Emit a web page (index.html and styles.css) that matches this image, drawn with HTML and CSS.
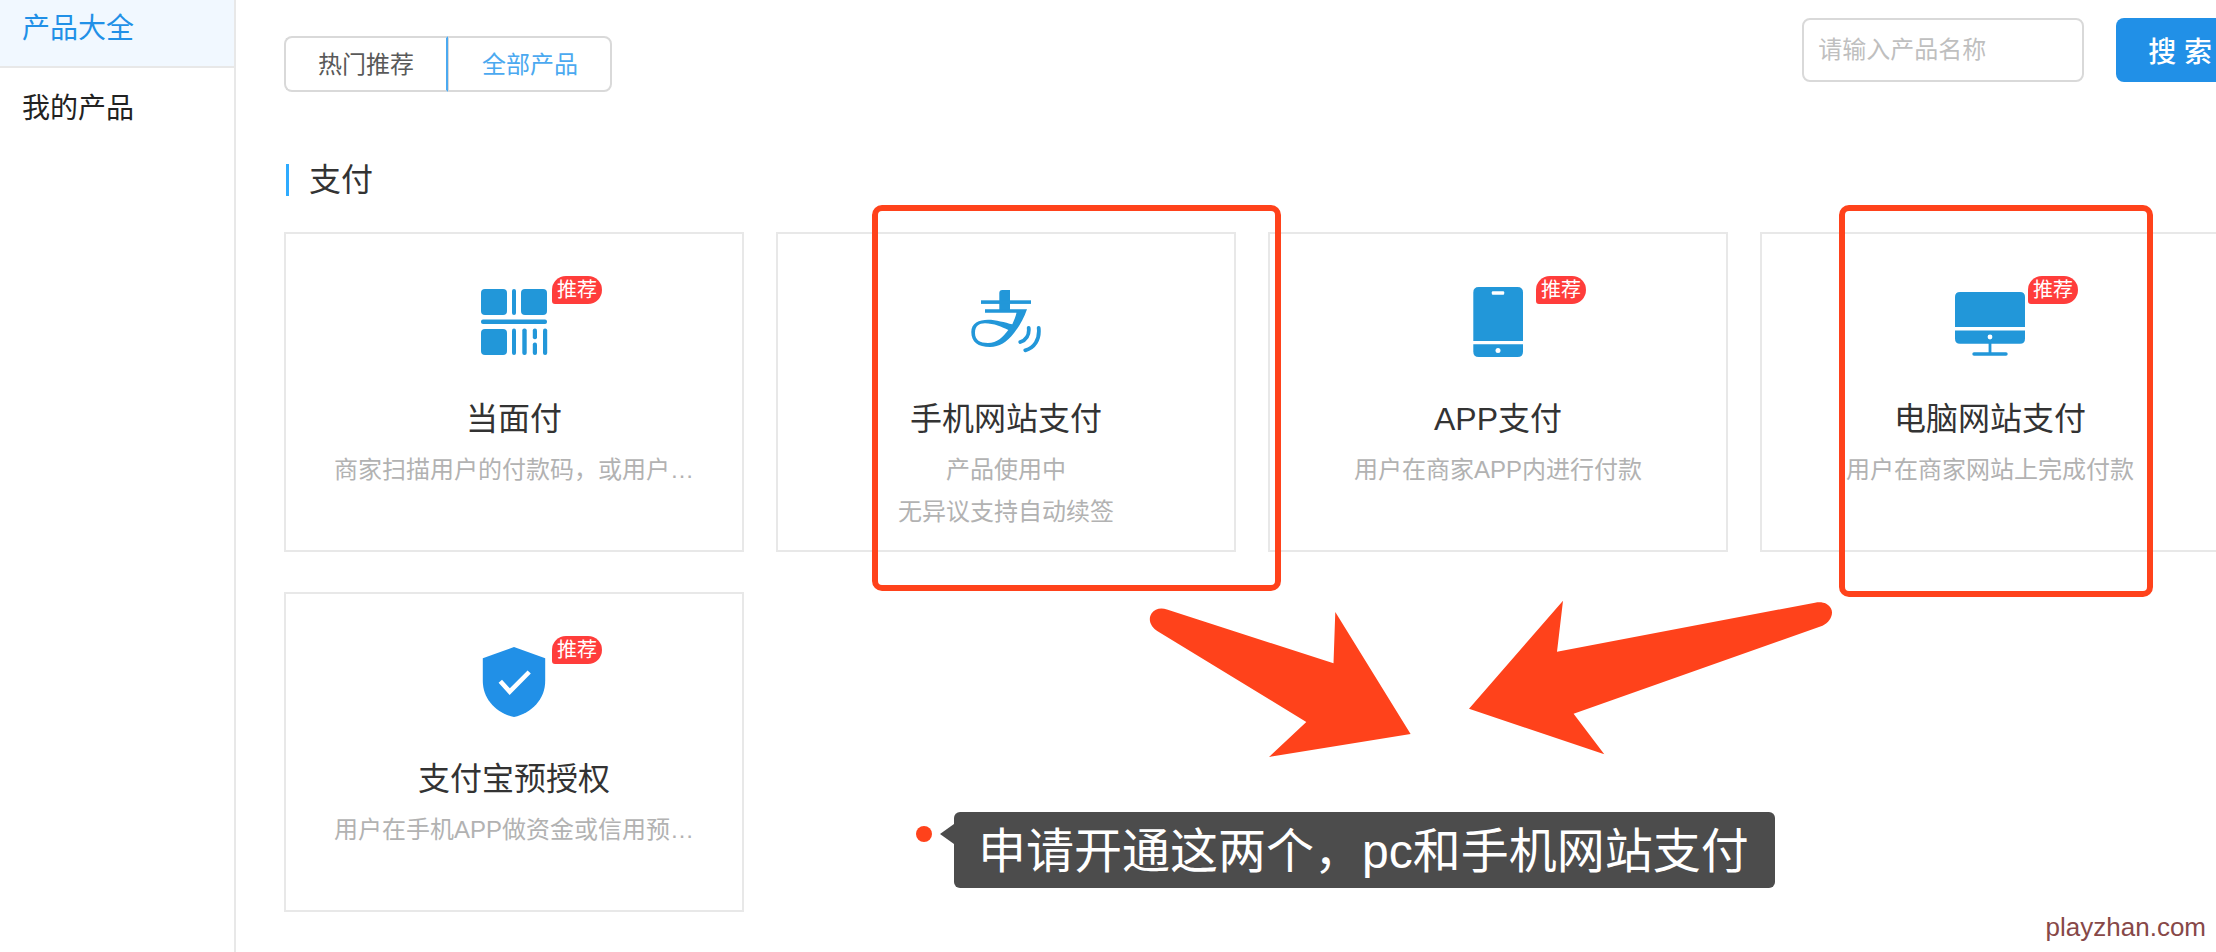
FILE: index.html
```html
<!DOCTYPE html>
<html lang="zh-CN">

<head>
    <meta charset="UTF-8">
    <meta name="viewport" content="width=device-width, initial-scale=1.0">
    <title>产品大全</title>

    <link rel="stylesheet" href="styles.css">
</head>

<body>
    <div class="page">
        <nav class="sidebar">
            <a class="menu-item active" href="#">产品大全</a>
            <a class="menu-item" href="#">我的产品</a>
        </nav>

        <main class="content">
            <div class="toolbar">
                <div class="tabs">
                    <button class="tab" type="button">热门推荐</button>
                    <button class="tab selected" type="button">全部产品</button>
                </div>
                <form class="search">
                    <input class="search-input" type="text" placeholder="请输入产品名称" aria-label="产品名称">
                    <button class="search-button" type="button">搜 索</button>
                </form>
            </div>

            <h2 class="section-title">支付</h2>

            <div class="products">
                <div class="card">
                    <div class="icon">
                        <svg viewBox="0 0 70 70" fill="#2297d9">
                            <rect x="2" y="2" width="26" height="26" rx="4" />
                            <rect x="42" y="2" width="26" height="26" rx="4" />
                            <rect x="2" y="42" width="26" height="26" rx="4" />
                            <rect x="33" y="2" width="4" height="26" rx="2" />
                            <rect x="2" y="32.5" width="66" height="4.5" rx="2" />
                            <rect x="33" y="41.5" width="4" height="26.5" rx="2" />
                            <rect x="43.3" y="41.5" width="4.4" height="26.5" rx="2" />
                            <rect x="53.8" y="41.5" width="4.2" height="10.7" rx="2" />
                            <rect x="53.8" y="55.6" width="4.2" height="12.4" rx="2" />
                            <rect x="64" y="41.5" width="4.2" height="26.5" rx="2" />
                        </svg>
                        <span class="badge">推荐</span>
                    </div>
                    <h3>当面付</h3>
                    <p>商家扫描用户的付款码，或用户…</p>
                </div>

                <div class="card">
                    <div class="icon">
                        <svg viewBox="0 0 70 70" fill="#2297d9">
                            <path d="M28.3 23V6Q28.3 3 31.3 3H39V23Z" />
                            <rect x="10" y="13.3" width="50" height="3.6" />
                            <path fill-rule="evenodd" d="M14 22.3H56C53 31 48 40 43 46C36 55 28 60 19 60C7 60 .3 55 .3 45C.3 36 8 32.7 17 32.7C25 32.7 34 35.5 41.3 37.3C43 33 45 29 45.5 25.7H14ZM37.3 43C31 40 23 36.3 14 36.3C8 36.3 4 39 4 46C4 53 9 56 17 56C26 56 32 50 37.3 43Z" />
                            <path d="M57.7 41C58.5 48 55 53 49.3 55M67.7 41C69 53 63 61 54.3 63.3" fill="none" stroke="#2297d9" stroke-width="3.8" stroke-linecap="round" />
                        </svg>
                    </div>
                    <h3>手机网站支付</h3>
                    <p>产品使用中</p>
                    <p>无异议支持自动续签</p>
                </div>

                <div class="card">
                    <div class="icon">
                        <svg viewBox="0 0 70 70" fill="#2297d9">
                            <path d="M10.3 54V5.5Q10.3 0 15.8 0H54.5Q60 0 60 5.5V54Z" />
                            <path d="M10.3 57.3H60V64.5Q60 70 54.5 70H15.8Q10.3 70 10.3 64.5Z" />
                            <rect x="28.8" y="4.3" width="12.4" height="3.5" rx="1" fill="#fff" />
                            <circle cx="35" cy="63.4" r="2.5" fill="#fff" />
                        </svg>
                        <span class="badge">推荐</span>
                    </div>
                    <h3>APP支付</h3>
                    <p>用户在商家APP内进行付款</p>
                </div>

                <div class="card">
                    <div class="icon">
                        <svg viewBox="0 0 70 70" fill="#2297d9">
                            <path d="M0 40V10Q0 5 5 5H65Q70 5 70 10V40Z" />
                            <path d="M0 43.4H70V51.7Q70 56.7 65 56.7H5Q0 56.7 0 51.7Z" />
                            <rect x="33.6" y="56" width="2.8" height="10" />
                            <rect x="17.3" y="65.3" width="35.4" height="3.5" rx="1.7" />
                            <circle cx="35" cy="50" r="2.4" fill="#fff" />
                        </svg>
                        <span class="badge">推荐</span>
                    </div>
                    <h3>电脑网站支付</h3>
                    <p>用户在商家网站上完成付款</p>
                </div>

                <div class="card">
                    <div class="icon">
                        <svg viewBox="0 0 70 70">
                            <path d="M35 0L66.2 11.2V34C66.2 52 53 66 35 70C17 66 3.8 52 3.8 34V11.2Z" fill="#2190e7" />
                            <path d="M21.3 34.2L30.7 44.6L50.2 25" fill="none" stroke="#fff" stroke-width="4.6" />
                        </svg>
                        <span class="badge">推荐</span>
                    </div>
                    <h3>支付宝预授权</h3>
                    <p>用户在手机APP做资金或信用预…</p>
                </div>
            </div>
        </main>

        <!-- marks drawn over the product list -->
        <div class="mark mark-mobile"></div>
        <div class="mark mark-pc"></div>
        <svg class="arrows" viewBox="0 0 700 160" fill="#ff421b">
            <path d="M27 9.5L193.5 63.3L195.3 12L270.6 134L129 157L166.3 122L18 31.5C11 27 7.5 20 11.5 13.5C15 8.5 21 7.5 27 9.5Z" />
            <path d="M675 2.7L417 51.7L423 .7L329 108.7L464.3 154.3L433.6 113.7L682.5 25.7C690 22.5 694 14 691 8.5C688 3 682 1.3 675 2.7Z" />
        </svg>
        <div class="note">
            <span class="dot"></span>
            <span class="note-text">申请开通这两个，pc和手机网站支付</span>
        </div>
        <div class="watermark">playzhan.com</div>
    </div>
</body>

</html>
```
FILE: styles.css
```css
* {
    box-sizing: border-box;
}

body {
    margin: 0;
    background-color: #fff;
    color: #333;
    font-family: "Liberation Sans", "Noto Sans CJK SC", sans-serif;
    font-size: 24px;
}

button,
input {
    font-family: inherit;
}

.page {
    position: relative;
    display: flex;
    min-height: 100vh;
    overflow: hidden;
}

.sidebar {
    width: 236px;
    flex-shrink: 0;
    border-right: 2px solid #e8e8e8;
}

.menu-item {
    display: block;
    padding: 13px 22px 11px;
    font-size: 28px;
    line-height: 56px;
    color: #222;
    text-decoration: none;
}

.menu-item.active {
    padding-top: 1px;
    padding-bottom: 9px;
    border-bottom: 2px solid #e8e8e8;
    background-color: #f1f8ff;
    color: #2190e7;
}

.content {
    flex: 1;
    min-width: 0;
    padding: 18px 0 40px 48px;
}

.toolbar {
    display: flex;
    justify-content: space-between;
    align-items: flex-start;
    margin-right: -28px;
}

.tabs {
    display: flex;
    margin-top: 18px;
}

.tab {
    height: 56px;
    padding: 0 32px 4px;
    border: 2px solid #d9d9d9;
    border-right-color: #4ba9f0;
    border-radius: 8px 0 0 8px;
    background-color: #fff;
    color: #595959;
    font-size: 24px;
    cursor: pointer;
}

.tab.selected {
    padding-left: 33px;
    border-color: #d9d9d9;
    border-left-width: 1px;
    border-radius: 0 8px 8px 0;
    color: #4ba9f0;
}

.search {
    display: flex;
    gap: 32px;
}

.search-input {
    width: 282px;
    height: 64px;
    padding: 0 14px;
    border: 2px solid #d9d9d9;
    border-radius: 8px;
    font-size: 24px;
}

.search-input::placeholder {
    color: #bfbfbf;
}

.search-button {
    height: 64px;
    padding: 0 32px;
    border: none;
    border-radius: 8px;
    background-color: #2190e7;
    color: #fff;
    font-size: 28px;
    font-weight: 500;
    cursor: pointer;
}

.section-title {
    display: flex;
    align-items: center;
    gap: 20px;
    margin: 64px 0 28px 2px;
    font-size: 32px;
    font-weight: normal;
    line-height: 48px;
}

.section-title::before {
    content: "";
    width: 3px;
    height: 32px;
    background-color: #2eabff;
}

.products {
    display: grid;
    grid-template-columns: repeat(4, 1fr);
    gap: 40px 32px;
    margin-right: -4px;
}

.card {
    min-height: 320px;
    padding: 53px 48px 0;
    border: 2px solid #e8e8e8;
    text-align: center;
}

.icon {
    position: relative;
    width: 70px;
    height: 70px;
    margin: 0 auto 38px;
}

.icon svg {
    display: block;
    width: 70px;
    height: 70px;
}

.badge {
    position: absolute;
    top: -11px;
    left: 73px;
    width: 50px;
    border-radius: 14px 14px 14px 3px;
    background-color: #ff3d3b;
    color: #fff;
    font-size: 20px;
    line-height: 28px;
}

.card h3 {
    margin: 0 0 6px;
    font-size: 32px;
    font-weight: normal;
    line-height: 48px;
}

.card p {
    margin: 0;
    overflow: hidden;
    color: #b2b2b2;
    line-height: 42px;
    text-overflow: ellipsis;
    white-space: nowrap;
}

.mark {
    position: absolute;
    top: 205px;
    border: 6px solid #ff421b;
    border-radius: 10px;
}

.mark-mobile {
    left: 872px;
    width: 409px;
    height: 386px;
}

.mark-pc {
    left: 1839px;
    width: 314px;
    height: 392px;
}

.arrows {
    position: absolute;
    top: 600px;
    left: 1140px;
    width: 700px;
    height: 160px;
}

.note {
    position: absolute;
    top: 812px;
    left: 916px;
    display: flex;
    align-items: flex-start;
    gap: 22px;
}

.dot {
    width: 16px;
    height: 16px;
    margin-top: 14px;
    border-radius: 50%;
    background-color: #ff421b;
}

.note-text {
    position: relative;
    padding: 4px 26px 0 24px;
    border-radius: 6px;
    background-color: #4c4c4c;
    color: #fff;
    font-size: 48px;
    line-height: 72px;
    white-space: nowrap;
}

.note-text::before {
    content: "";
    position: absolute;
    top: 12px;
    left: -14px;
    border: 10px solid transparent;
    border-right: 14px solid #4c4c4c;
    border-left: none;
}

.watermark {
    position: absolute;
    right: 10px;
    bottom: 10px;
    color: #874848;
    font-size: 26px;
    line-height: 30px;
}
```
